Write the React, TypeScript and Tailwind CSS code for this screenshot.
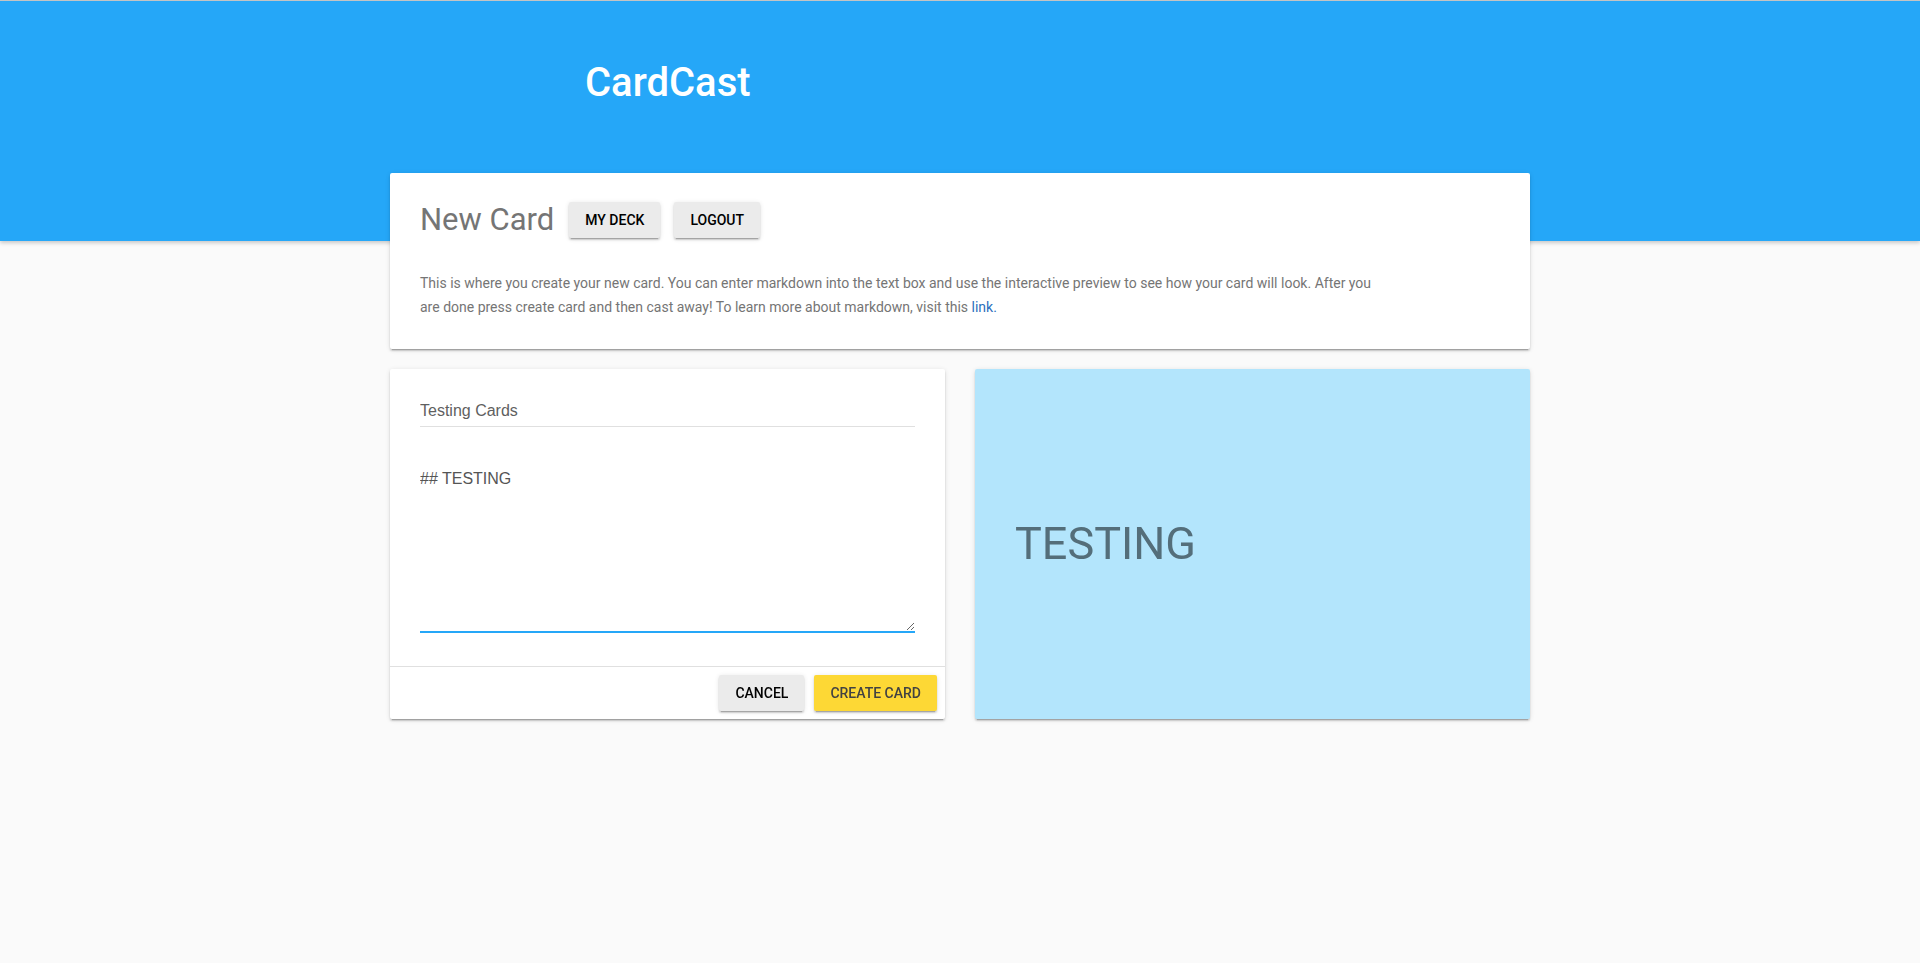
import { useEffect, useRef } from "react";

const shadow =
  "shadow-[0_2px_2px_0_rgba(0,0,0,0.14),0_3px_1px_-2px_rgba(0,0,0,0.2),0_1px_5px_0_rgba(0,0,0,0.12)]";

function RaisedButton(props: { label: string; yellow?: boolean }) {
  return (
    <button
      className={
        "h-9 px-4 rounded-[2px] text-[14px] font-medium uppercase leading-9 " +
        shadow +
        (props.yellow ? " bg-[#fdd835] text-[#424242]" : " bg-[#ebebeb] text-black")
      }
    >
      {props.label}
    </button>
  );
}

export default function App() {
  const areaRef = useRef<HTMLTextAreaElement>(null);

  useEffect(() => {
    const el = areaRef.current;
    if (el) {
      el.focus();
      el.setSelectionRange(el.value.length, el.value.length);
    }
  }, []);

  return (
    <div className="min-h-screen bg-[#fafafa] font-['Roboto',sans-serif]">
      <header className="h-[241px] bg-[#25a7f8] border-t border-[#c4c4c4] shadow-[0_2px_4px_0_rgba(0,0,0,0.2)]">
        <div className="mx-auto w-[1140px] pl-[195px] pt-[58px]">
          <h1 className="text-[40px] leading-[48px] font-medium text-white">CardCast</h1>
        </div>
      </header>

      <main className="relative -mt-[68px] mx-auto w-[1140px] flex flex-col gap-5 pb-10">
        {/* intro card */}
        <section className={"bg-white rounded-[2px] px-[30px] pt-[29px] pb-[30px] " + shadow}>
          <div className="flex items-center h-9">
            <h2 className="text-[31px] leading-9 text-[#757575] mr-[15px]">New Card</h2>
            <RaisedButton label="My Deck" />
            <div className="w-[14px]" />
            <RaisedButton label="Logout" />
          </div>
          <p className="mt-[33px] max-w-[960px] text-[14px] leading-6 text-[#757575]">
            This is where you create your new card. You can enter markdown into the text box and use the
            interactive preview to see how your card will look. After you are done press create card and then
            cast away! To learn more about markdown, visit this{" "}
            <a href="#" className="text-[#2c6fbd]">
              link.
            </a>
          </p>
        </section>

        <div className="flex gap-[30px]">
          {/* editor */}
          <section className={"w-[555px] h-[350px] bg-white rounded-[2px] flex flex-col " + shadow}>
            <div className="px-[30px] pt-[30px]">
              <div className="border-b border-[#e0e0e0] pb-[3px]">
                <input
                  className="block w-full h-6 bg-transparent outline-none text-[16px] leading-6 text-[#5f5f5f] font-['Liberation_Sans',Arial,sans-serif]"
                  defaultValue="Testing Cards"
                />
              </div>
              <textarea
                ref={areaRef}
                autoFocus
                className="mt-[42px] block w-full h-[164px] p-0 resize-y outline-none border-b-2 border-[#25a7f8] text-[16px] leading-5 text-[#555] caret-[#333] font-['Liberation_Sans',Arial,sans-serif]"
                defaultValue="## TESTING"
              />
            </div>
            <div className="mt-[33px] border-t border-[#e0e0e0] flex justify-end gap-[10px] pt-2 pb-2 pr-2">
              <RaisedButton label="Cancel" />
              <RaisedButton label="Create Card" yellow />
            </div>
          </section>

          {/* preview */}
          <section className={"w-[555px] h-[350px] bg-[#b3e5fc] rounded-[2px] flex items-center pl-10 " + shadow}>
            <h2 className="text-[45px] leading-[48px] text-[#546e7a]">TESTING</h2>
          </section>
        </div>
      </main>
    </div>
  );
}
